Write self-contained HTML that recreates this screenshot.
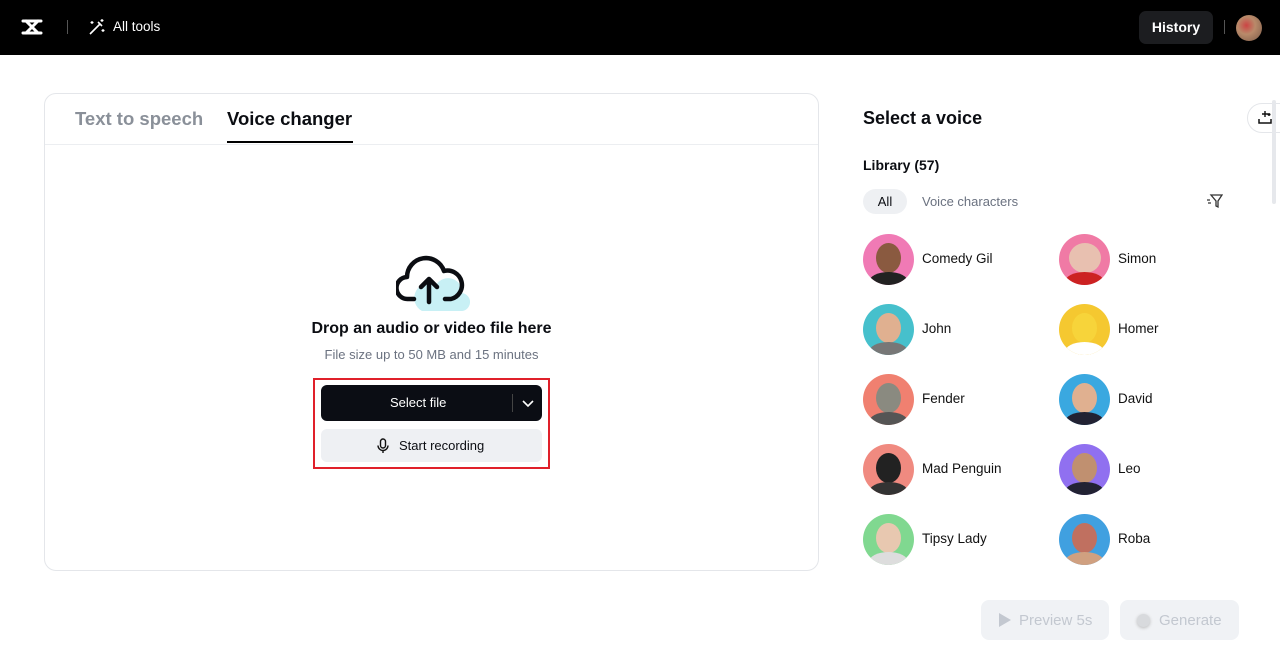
<!DOCTYPE html>
<html><head><meta charset="utf-8"><style>
*{box-sizing:border-box;margin:0;padding:0}
body{width:1280px;height:670px;background:#fff;font-family:"Liberation Sans",sans-serif;position:relative;overflow:hidden;color:#0b0d12}
.top{position:absolute;left:0;top:0;width:1280px;height:55px;background:#000}
.card{position:absolute;left:44px;top:93px;width:775px;height:478px;border:1px solid #e4e6ea;border-radius:12px}
.tab{position:absolute;top:108px;font-size:18.5px;font-weight:bold}
.av{position:absolute;width:51px;height:51px;border-radius:50%;overflow:hidden}
.av i{position:absolute;left:13px;top:9px;width:25px;height:30px;border-radius:50%;display:block}
.av b{position:absolute;left:6px;top:38px;width:39px;height:20px;border-radius:50%;display:block}
.nm{position:absolute;font-size:13.5px;color:#111}
.btn{position:absolute;border-radius:8px;background:#f0f2f5;color:#c3c8d0;font-size:15px}
</style></head><body>
<div class="top">
<svg style="position:absolute;left:20px;top:17px" width="24" height="20" viewBox="0 0 24 20"><path d="M3 4h18M3 16h18M6 4l12 12M18 4L6 16" fill="none" stroke="#fff" stroke-width="3" stroke-linecap="round" stroke-linejoin="round"/></svg>
<div style="position:absolute;left:67px;top:20px;width:1px;height:14px;background:#555"></div>
<svg style="position:absolute;left:88px;top:18px" width="18" height="18" viewBox="0 0 18 18"><path d="M2 16L12 6M10 4l4 4" stroke="#fff" stroke-width="1.6" fill="none"/><path d="M14 1v3M12.5 2.5h3M4 3v3M2.5 4.5h3M15 11v3M13.5 12.5h3" stroke="#fff" stroke-width="1.2"/></svg>
<div style="position:absolute;left:113px;top:19px;color:#fff;font-size:13.5px">All tools</div>
<div style="position:absolute;left:1139px;top:11px;width:74px;height:33px;background:#1c1d20;border-radius:7px;color:#fff;font-weight:bold;font-size:14px;text-align:center;line-height:33px">History</div>
<div style="position:absolute;left:1224px;top:20px;width:1px;height:14px;background:#555"></div>
<div style="position:absolute;left:1236px;top:15px;width:26px;height:26px;border-radius:50%;background:radial-gradient(circle at 40% 40%,#c44 0,#b98a6a 40%,#7a5a48 100%)"></div>
</div>
<div class="card"></div>
<div class="tab" style="left:75px;color:#8a9099">Text to speech</div>
<div class="tab" style="left:227px">Voice changer</div>
<div style="position:absolute;left:227px;top:141px;width:126px;height:2px;background:#000"></div>
<div style="position:absolute;left:45px;top:144px;width:773px;height:1px;background:#eceef1"></div>
<svg style="position:absolute;left:396px;top:253px" width="74" height="60" viewBox="0 0 74 60"><path d="M26 58h38a9 9 0 0 0 2-18a14 14 0 0 0-26-8a11 11 0 0 0-14 26z" fill="#c8f0f5"/><path d="M18 46h-6a11 11 0 0 1-1-22a19 19 0 0 1 37-6a14 14 0 0 1 7 28h-6" fill="none" stroke="#0b0d12" stroke-width="4.5" stroke-linecap="round" stroke-linejoin="round"/><path d="M33 49V26M25 34l8-8 8 8" fill="none" stroke="#0b0d12" stroke-width="4.5" stroke-linecap="round" stroke-linejoin="round"/></svg>
<div style="position:absolute;left:0;width:863px;top:320px;text-align:center;font-weight:bold;font-size:16px">Drop an audio or video file here</div>
<div style="position:absolute;left:0;width:863px;top:347px;text-align:center;font-size:13px;color:#6b7280">File size up to 50 MB and 15 minutes</div>
<div style="position:absolute;left:313px;top:378px;width:237px;height:91px;border:2px solid #e0202a"></div>
<div style="position:absolute;left:321px;top:385px;width:221px;height:36px;background:#0b0d14;border-radius:6px;color:#fff;font-size:13px">
<span style="position:absolute;left:69px;top:10px">Select file</span>
<div style="position:absolute;left:191px;top:9px;width:1px;height:18px;background:#444"></div>
<svg style="position:absolute;left:201px;top:13px" width="12" height="10"><path d="M1 3l5 5 5-5" stroke="#fff" stroke-width="1.6" fill="none"/></svg></div>
<div style="position:absolute;left:321px;top:429px;width:221px;height:33px;background:#eef0f3;border-radius:6px;font-size:13px">
<svg style="position:absolute;left:56px;top:9px" width="12" height="16" viewBox="0 0 12 16"><rect x="3.5" y="1" width="5" height="9" rx="2.5" fill="none" stroke="#111" stroke-width="1.4"/><path d="M1 7.5a5 5 0 0 0 10 0M6 12.5V15" fill="none" stroke="#111" stroke-width="1.4"/></svg>
<span style="position:absolute;left:78px;top:9px">Start recording</span></div>

<div style="position:absolute;left:863px;top:108px;font-size:18px;font-weight:bold">Select a voice</div>
<div style="position:absolute;left:863px;top:157px;font-size:14px;font-weight:bold">Library (57)</div>
<div style="position:absolute;left:863px;top:189px;width:44px;height:25px;background:#eef0f3;border-radius:13px;text-align:center;line-height:25px;font-size:13px">All</div>
<div style="position:absolute;left:922px;top:194px;font-size:13px;color:#6b7280">Voice characters</div>
<svg style="position:absolute;left:1206px;top:194px" width="17" height="15" viewBox="0 0 17 15"><path d="M5 1h11l-4 6v6l-2-1V7z" fill="none" stroke="#333" stroke-width="1.3"/><path d="M1 6h3M2 9h3" stroke="#333" stroke-width="1.2"/></svg>
<div style="position:absolute;left:1247px;top:103px;width:40px;height:30px;border:1px solid #e4e6ea;border-radius:15px 0 0 15px;background:#fff"></div>
<svg style="position:absolute;left:1257px;top:109px" width="16" height="16" viewBox="0 0 16 16"><path d="M2 10v4h12v-4" fill="none" stroke="#111" stroke-width="1.5"/><path d="M8 2v6M5 5h6M12 4v3M10.5 5.5h3" stroke="#111" stroke-width="1.4"/></svg>
<div style="position:absolute;left:1272px;top:100px;width:4px;height:104px;background:#e6e8ec;border-radius:2px"></div>

<div class="av" style="left:863px;top:234px;background:#f07ab5"><i style="background:#8a5a40"></i><b style="background:#222"></b></div><div class="nm" style="left:922px;top:251px">Comedy Gil</div>
<div class="av" style="left:1059px;top:234px;background:#f07aa5"><i style="background:#e8c0b0;width:32px;left:10px"></i><b style="background:#c22"></b></div><div class="nm" style="left:1118px;top:251px">Simon</div>
<div class="av" style="left:863px;top:304px;background:#46c0cc"><i style="background:#e0b090"></i><b style="background:#777"></b></div><div class="nm" style="left:922px;top:321px">John</div>
<div class="av" style="left:1059px;top:304px;background:#f5c830"><i style="background:#f7d43a"></i><b style="background:#fff"></b></div><div class="nm" style="left:1118px;top:321px">Homer</div>
<div class="av" style="left:863px;top:374px;background:#f08070"><i style="background:#8a8a80"></i><b style="background:#555"></b></div><div class="nm" style="left:922px;top:391px">Fender</div>
<div class="av" style="left:1059px;top:374px;background:#3aa8e0"><i style="background:#e0b090"></i><b style="background:#223"></b></div><div class="nm" style="left:1118px;top:391px">David</div>
<div class="av" style="left:863px;top:444px;background:#f08a80"><i style="background:#222"></i><b style="background:#333"></b></div><div class="nm" style="left:922px;top:461px">Mad Penguin</div>
<div class="av" style="left:1059px;top:444px;background:#9070f0"><i style="background:#c09070"></i><b style="background:#223"></b></div><div class="nm" style="left:1118px;top:461px">Leo</div>
<div class="av" style="left:863px;top:514px;background:#80d890"><i style="background:#e8c8b0"></i><b style="background:#ddd"></b></div><div class="nm" style="left:922px;top:531px">Tipsy Lady</div>
<div class="av" style="left:1059px;top:514px;background:#40a0e0"><i style="background:#c07060"></i><b style="background:#d0a080"></b></div><div class="nm" style="left:1118px;top:531px">Roba</div>

<div class="btn" style="left:981px;top:600px;width:128px;height:40px">
<svg style="position:absolute;left:18px;top:13px" width="12" height="14"><path d="M0 0l12 7-12 7z" fill="#c3c8d0"/></svg>
<span style="position:absolute;left:38px;top:12px">Preview 5s</span></div>
<div class="btn" style="left:1120px;top:600px;width:119px;height:40px">
<div style="position:absolute;left:17px;top:14px;width:13px;height:13px;border-radius:50%;background:#d8dadd;box-shadow:0 1px 3px #bbb"></div>
<span style="position:absolute;left:39px;top:12px">Generate</span></div>
</body></html>
